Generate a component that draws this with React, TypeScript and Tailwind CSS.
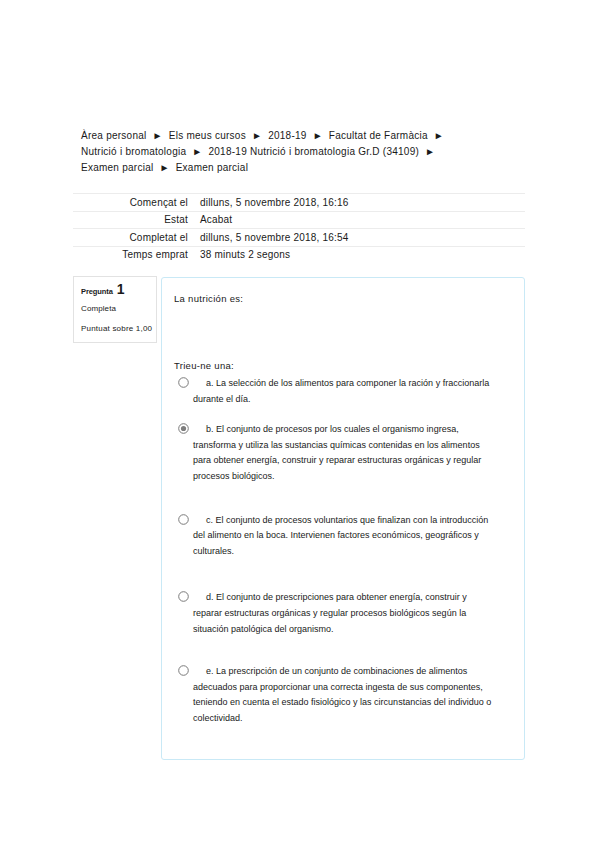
import React from "react";

const Radio = ({ checked }: { checked?: boolean }) => (
  <span className="inline-block align-middle ml-[-15px] mr-[17px] mt-[-2px]">
    <svg width="11" height="11" viewBox="0 0 11 11">
      <circle cx="5.5" cy="5.5" r="4.8" fill="#fff" stroke="#7a7a7a" strokeWidth="1" />
      {checked && <circle cx="5.5" cy="5.5" r="2.6" fill="#7d7d7d" />}
    </svg>
  </span>
);

const Option = ({
  checked,
  mt,
  lines,
}: {
  checked?: boolean;
  mt: string;
  lines: string[];
}) => (
  <div className={`${mt} pl-[19px] text-[9px] leading-[15.6px] whitespace-nowrap`}>
    <Radio checked={checked} />
    {lines.map((l, i) => (
      <React.Fragment key={i}>
        {i > 0 && <br />}
        {l}
      </React.Fragment>
    ))}
  </div>
);

export default function App() {
  return (
    <div
      className="w-[599px] h-[848px] bg-white text-[#1a1a1a] pt-[128px] pl-[73px]"
      style={{ fontFamily: '"Liberation Sans", Arial, sans-serif' }}
    >
      <div className="pl-[8px] text-[10px] leading-[16px] tracking-[0.25px]">
        Àrea personal&nbsp; ►&nbsp; Els meus cursos&nbsp; ►&nbsp; 2018-19&nbsp; ►&nbsp; Facultat de Farmàcia&nbsp; ►
        <br />
        Nutrició i bromatologia&nbsp; ►&nbsp; 2018-19 Nutrició i bromatologia Gr.D (34109)&nbsp; ►
        <br />
        Examen parcial&nbsp; ►&nbsp; Examen parcial
      </div>

      <div className="mt-[17px] w-[452px] text-[10px] tracking-[0.2px]">
        {[
          ["Començat el", "dilluns, 5 novembre 2018, 16:16"],
          ["Estat", "Acabat"],
          ["Completat el", "dilluns, 5 novembre 2018, 16:54"],
          ["Temps emprat", "38 minuts 2 segons"],
        ].map(([k, v], i) => (
          <div key={i} className="flex h-[17.5px] items-center border-t border-[#ececec]">
            <div className="w-[120px] pr-[5px] text-right">{k}</div>
            <div className="pl-[7px]">{v}</div>
          </div>
        ))}
      </div>

      <div className="mt-[13px] flex items-start">
        <div className="w-[84px] h-[67px] border border-[#e2e2e2] bg-white pl-[7px] pt-[5px]">
          <div className="flex items-baseline h-[16px]">
            <span className="text-[7.5px] font-bold tracking-[-0.1px]">Pregunta</span>
            <span className="ml-[4px] text-[14px] font-bold leading-[14px]">1</span>
          </div>
          <div className="mt-[4px] text-[8px] leading-[14px] tracking-[0.1px]">Completa</div>
          <div className="mt-[6px] text-[8px] leading-[14px] tracking-[0.2px]">Puntuat sobre 1,00</div>
        </div>

        <div className="ml-[4px] mt-[1px] w-[364px] h-[483px] border border-[#c9e9f6] rounded-[3px] pl-[12px] pt-[14px]">
          <div className="text-[9.5px] leading-[14px] tracking-[0.3px]">La nutrición es:</div>
          <div className="mt-[53px] text-[9.5px] leading-[14px] tracking-[0.3px]">Trieu-ne una:</div>
          <Option
            mt="mt-[3px]"
            lines={[
              "a. La selección de los alimentos para componer la ración y fraccionarla",
              "durante el día.",
            ]}
          />
          <Option
            mt="mt-[15px]"
            checked
            lines={[
              "b. El conjunto de procesos por los cuales el organismo ingresa,",
              "transforma y utiliza las sustancias químicas contenidas en los alimentos",
              "para obtener energía, construir y reparar estructuras orgánicas y regular",
              "procesos biológicos.",
            ]}
          />
          <Option
            mt="mt-[28px]"
            lines={[
              "c. El conjunto de procesos voluntarios que finalizan con la introducción",
              "del alimento en la boca. Intervienen factores económicos, geográficos y",
              "culturales.",
            ]}
          />
          <Option
            mt="mt-[31px]"
            lines={[
              "d. El conjunto de prescripciones para obtener energía, construir y",
              "reparar estructuras orgánicas y regular procesos biológicos según la",
              "situación patológica del organismo.",
            ]}
          />
          <Option
            mt="mt-[27px]"
            lines={[
              "e. La prescripción de un conjunto de combinaciones de alimentos",
              "adecuados para proporcionar una correcta ingesta de sus componentes,",
              "teniendo en cuenta el estado fisiológico y las circunstancias del individuo o",
              "colectividad.",
            ]}
          />
        </div>
      </div>
    </div>
  );
}
